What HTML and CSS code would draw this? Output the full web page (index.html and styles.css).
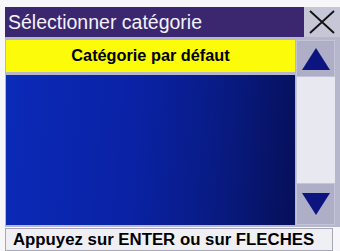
FILE: index.html
```html
<!DOCTYPE html>
<html>
<head>
<meta charset="utf-8">
<link rel="stylesheet" href="styles.css">
</head>
<body>
<div class="screen">
  <div class="header">
    <div class="title">Sélectionner catégorie</div>
    <div class="close">
      <svg width="30" height="26" viewBox="0 0 30 26"><path d="M3 2 L27 24 M27 2 L3 24" stroke="#111" stroke-width="1.8" fill="none"/></svg>
    </div>
  </div>
  <div class="frame">
    <div class="list">
      <div class="item">Catégorie par défaut</div>
      <div class="pane"></div>
    </div>
    <div class="scroll">
      <div class="btn">
        <svg width="28" height="22" viewBox="0 0 28 22"><polygon points="14,0 28,22 0,22" fill="#0c1480"/></svg>
      </div>
      <div class="track"></div>
      <div class="btn">
        <svg width="28" height="22" viewBox="0 0 28 22"><polygon points="0,0 28,0 14,22" fill="#0c1480"/></svg>
      </div>
    </div>
  </div>
  <div class="status">Appuyez sur ENTER ou sur FLECHES</div>
</div>
</body>
</html>
```
FILE: styles.css
```css
html, body {
  margin: 0;
  padding: 0;
  background: #f7f7fa;
}
.screen {
  width: 340px;
  height: 251px;
  padding-top: 7px;
  box-sizing: border-box;
  font-family: "Liberation Sans", Arial, sans-serif;
  display: flex;
  flex-direction: column;
}
.header {
  display: flex;
  height: 30px;
  margin-left: 5px;
}
.title {
  flex: 1;
  background: #3a2770;
  color: #f4f2fa;
  font-size: 19.5px;
  line-height: 30px;
  padding-left: 3px;
  white-space: nowrap;
}
.close {
  width: 36px;
  background: #c6c6d6;
  display: flex;
  align-items: center;
  justify-content: center;
}
.frame {
  height: 190px;
  margin-left: 5px;
  background: #b6b6cc;
  display: flex;
  padding: 3px 5px 2px 1px;
  box-sizing: border-box;
  gap: 1px;
}
.list {
  width: 289px;
  display: flex;
  flex-direction: column;
  gap: 3px;
}
.item {
  height: 32px;
  background: #fcfc0a;
  color: #000;
  font-weight: bold;
  font-size: 16.3px;
  line-height: 30px;
  text-align: center;
  white-space: nowrap;
}
.pane {
  flex: 1;
  background: linear-gradient(95deg, #0a2ab8 0%, #0a22a4 45%, #081a80 75%, #060f58 100%);
}
.scroll {
  width: 39px;
  display: flex;
  flex-direction: column;
}
.btn {
  height: 37px;
  background: #aeaec6;
  border: 1px solid #c4c4d8;
  box-sizing: border-box;
  display: flex;
  align-items: center;
  justify-content: center;
}
.track {
  flex: 1;
  background: #e8e8f0;
  border-left: 1px solid #c8c8d8;
}
.scroll .btn:last-child {
  height: 42px;
}
.status {
  margin-left: 5px;
  width: 328px;
  height: 23px;
  margin-top: 1px;
  background: #f0f0f4;
  border: 1px solid #a8a8b8;
  box-sizing: border-box;
  font-size: 16.8px;
  font-weight: bold;
  line-height: 21px;
  padding-left: 7px;
  color: #000;
  white-space: nowrap;
}
```
